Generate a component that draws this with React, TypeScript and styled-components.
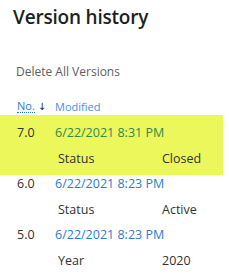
import { createGlobalStyle, styled } from 'styled-components';

const GlobalStyle = createGlobalStyle`
  html, body {
    margin: 0;
    padding: 0;
    background: #ffffff;
  }
  body {
    font-family: 'Open Sans', 'Noto Sans', sans-serif;
    color: #323130;
  }
`;

interface Version {
  no: string;
  modified: string;
  field: string;
  value: string;
  highlighted?: boolean;
}

const versions: Version[] = [
  { no: '7.0', modified: '6/22/2021 8:31 PM', field: 'Status', value: 'Closed', highlighted: true },
  { no: '6.0', modified: '6/22/2021 8:23 PM', field: 'Status', value: 'Active' },
  { no: '5.0', modified: '6/22/2021 8:23 PM', field: 'Year', value: '2020' },
];

const App = () => {
  return (
    <>
      <GlobalStyle />
      <Panel>
        <Title>Version history</Title>
        <DeleteAll>Delete All Versions</DeleteAll>
        <Header>
          <NoHeader>
            <Sortable>No.</Sortable>
            <Arrow>↓</Arrow>
          </NoHeader>
          <HeaderLabel>Modified</HeaderLabel>
        </Header>
        <List>
          {versions.map((v) => (
            <Item key={v.no} $highlighted={v.highlighted}>
              <MainRow>
                <VersionNo>{v.no}</VersionNo>
                <DateLink $highlighted={v.highlighted}>{v.modified}</DateLink>
              </MainRow>
              <FieldRow>
                <FieldName>{v.field}</FieldName>
                <FieldValue>{v.value}</FieldValue>
              </FieldRow>
            </Item>
          ))}
        </List>
      </Panel>
    </>
  );
};

export default App;

const Panel = styled.div`
  width: 229px;
  display: flex;
  flex-direction: column;
`;

const Title = styled.h1`
  margin: 0;
  padding: 3px 0 0 13px;
  font-size: 19px;
  font-weight: 600;
  line-height: 28px;
  color: #201f1e;
  letter-spacing: -0.2px;
`;

const DeleteAll = styled.div`
  margin-top: 32px;
  padding-left: 16px;
  font-size: 12px;
  line-height: 18px;
  color: #605e5c;
`;

const Header = styled.div`
  margin-top: 16px;
  display: flex;
  align-items: center;
  padding-left: 17px;
  height: 18px;
  font-size: 11px;
`;

const NoHeader = styled.div`
  width: 38px;
  display: flex;
  align-items: center;
  gap: 3px;
`;

const Sortable = styled.span`
  color: #2b7cd3;
  border-bottom: 1px dotted #2b7cd3;
  line-height: 13px;
`;

const Arrow = styled.span`
  color: #201f1e;
  font-family: 'DejaVu Sans', sans-serif;
  font-size: 10px;
`;

const HeaderLabel = styled.span`
  color: #4a90e2;
`;

const List = styled.div`
  display: flex;
  flex-direction: column;
`;

const Item = styled.div<{ $highlighted?: boolean }>`
  width: 223px;
  display: flex;
  flex-direction: column;
  padding: ${(p) => (p.$highlighted ? '6px 0 7px' : '2px 0 2px')};
  margin-bottom: ${(p) => (p.$highlighted ? '-5px' : '0')};
  background: ${(p) => (p.$highlighted ? '#ebf75b' : 'transparent')};
  font-size: 12.5px;
`;

const MainRow = styled.div`
  display: flex;
  align-items: center;
  height: 22px;
  padding-left: 17px;
`;

const VersionNo = styled.span`
  width: 38px;
  color: #323130;
`;

const DateLink = styled.span<{ $highlighted?: boolean }>`
  color: ${(p) => (p.$highlighted ? '#2f8a52' : '#2b7cd3')};
`;

const FieldRow = styled.div`
  display: flex;
  align-items: center;
  height: 20px;
  margin-top: 5px;
  padding-left: 58px;
`;

const FieldName = styled.span`
  width: 104px;
  color: #323130;
`;

const FieldValue = styled.span`
  color: #323130;
`;
